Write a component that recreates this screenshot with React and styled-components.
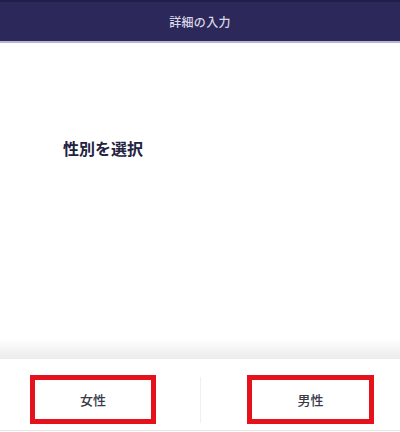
import React from 'react';
import styled, { createGlobalStyle } from 'styled-components';

const GlobalStyle = createGlobalStyle`
  html, body {
    margin: 0;
    padding: 0;
    background: #ffffff;
  }
  body {
    font-family: "Noto Sans CJK JP", "Noto Sans", sans-serif;
  }
`;

const Page = styled.div`
  display: flex;
  flex-direction: column;
  width: 400px;
  height: 432px;
  overflow: hidden;
`;

const Header = styled.header`
  display: flex;
  align-items: center;
  justify-content: center;
  box-sizing: border-box;
  height: 43px;
  background: #2c2859;
  border-top: 2px solid #211e49;
  border-bottom: 2px solid #b8b5d4;
  color: #d9d7e6;
  font-size: 12px;
  font-weight: 500;
  letter-spacing: 0.3px;
`;

const Main = styled.main`
  flex: 1;
  padding: 94px 0 0 63px;
  background: linear-gradient(to bottom, #ffffff calc(100% - 20px), #ebebeb 100%);
`;

const Title = styled.h1`
  margin: 0;
  font-size: 16px;
  line-height: 22px;
  font-weight: 700;
  color: #23223f;
`;

const Footer = styled.footer`
  display: flex;
  align-items: stretch;
  height: 72px;
  padding: 16px 26px 7px 30px;
  box-sizing: border-box;
  border-bottom: 1px solid #e8e8e8;
  margin-bottom: 1px;
`;

const Half = styled.div`
  flex: 0 0 ${(p) => p.$basis}px;
  display: flex;
  justify-content: ${(p) => p.$align};
`;

const Divider = styled.div`
  width: 1px;
  margin: 2px 0 0;
  background: #f0f0f0;
`;

const Choice = styled.button`
  width: ${(p) => p.$width}px;
  height: 49px;
  box-sizing: border-box;
  border: 5px solid #e5121b;
  background: #ffffff;
  display: flex;
  align-items: center;
  justify-content: center;
  font-family: inherit;
  font-size: 13px;
  font-weight: 500;
  color: #3a3a48;
  padding: 0;
  cursor: pointer;
`;

const App = () => {
  return (
    <Page>
      <GlobalStyle />
      <Header>詳細の入力</Header>
      <Main>
        <Title>性別を選択</Title>
      </Main>
      <Footer>
        <Half $basis={170} $align="flex-start">
          <Choice $width={126}>女性</Choice>
        </Half>
        <Divider />
        <Half $basis={173} $align="flex-end">
          <Choice $width={127}>男性</Choice>
        </Half>
      </Footer>
    </Page>
  );
};

export default App;
